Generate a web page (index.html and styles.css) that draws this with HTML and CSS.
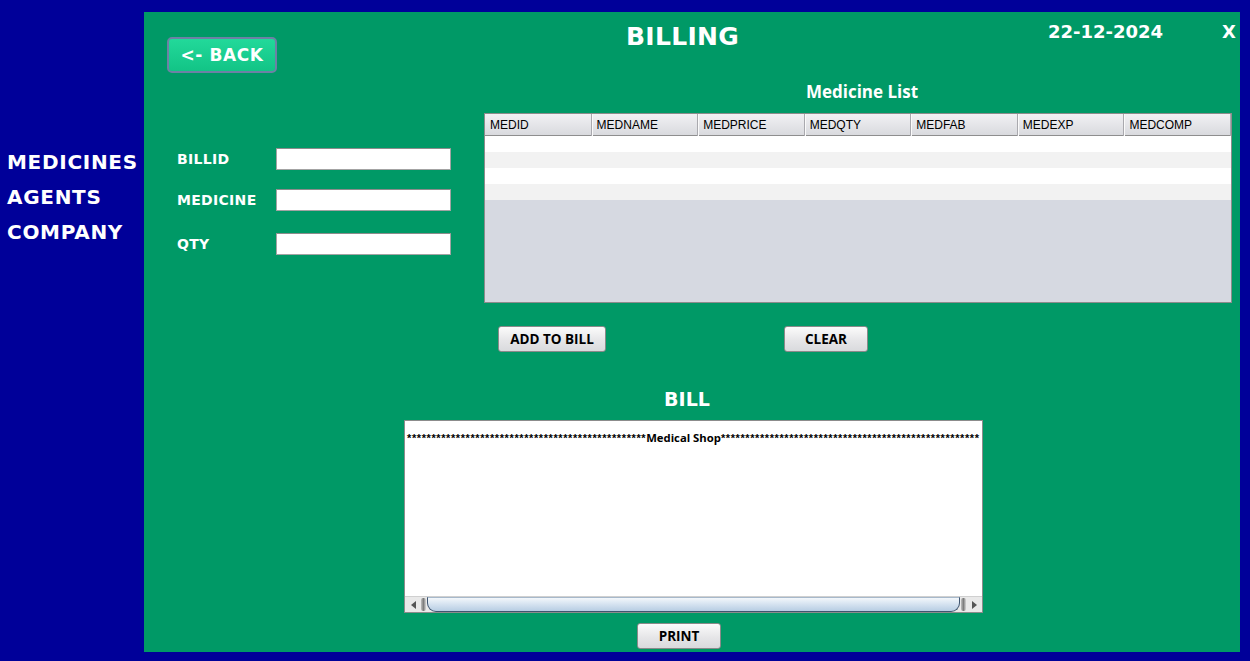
FILE: index.html
```html
<!DOCTYPE html>
<html>
<head>
<meta charset="utf-8">
<title>Billing</title>
<link rel="stylesheet" href="styles.css">
</head>
<body>
<div class="app">
  <aside class="side">
    <div class="side-item">MEDICINES</div>
    <div class="side-item">AGENTS</div>
    <div class="side-item">COMPANY</div>
  </aside>
  <main class="panel">
    <div class="top">
      <div class="left">
        <button class="back">&lt;- BACK</button>
        <div class="form">
          <div class="row"><span class="lbl">BILLID</span><div class="field"></div></div>
          <div class="row r2"><span class="lbl">MEDICINE</span><div class="field"></div></div>
          <div class="row r3"><span class="lbl">QTY</span><div class="field"></div></div>
        </div>
      </div>
      <div class="right">
        <div class="hdr">
          <div class="title">BILLING</div>
          <div class="date">22-12-2024</div>
          <div class="close">X</div>
        </div>
        <div class="list-title">Medicine List</div>
        <div class="table">
          <div class="thead">
            <div class="th">MEDID</div>
            <div class="th">MEDNAME</div>
            <div class="th">MEDPRICE</div>
            <div class="th">MEDQTY</div>
            <div class="th">MEDFAB</div>
            <div class="th">MEDEXP</div>
            <div class="th">MEDCOMP</div>
          </div>
          <div class="tr"></div>
          <div class="tr alt"></div>
          <div class="tr"></div>
          <div class="tr alt"></div>
        </div>
        <div class="actions">
          <button class="btn add">ADD TO BILL</button>
          <button class="btn clear">CLEAR</button>
        </div>
      </div>
    </div>
    <div class="bottom">
      <div class="bill-title">BILL</div>
      <div class="bill">
        <div class="bill-text"><span class="stars">*************************************************</span>Medical Shop<span class="stars">*****************************************************</span></div>
        <div class="hscroll">
          <div class="arrow"><span class="tri-l"></span></div>
          <div class="grip"></div>
          <div class="thumb"></div>
          <div class="grip"></div>
          <div class="arrow"><span class="tri-r"></span></div>
        </div>
      </div>
      <button class="btn print">PRINT</button>
    </div>
  </main>
</div>
</body>
</html>
```

FILE: styles.css
```css
* { box-sizing: border-box; }
html, body { margin: 0; padding: 0; }
body {
  width: 1250px;
  height: 661px;
  background: #000099;
  overflow: hidden;
  font-family: "DejaVu Sans", sans-serif;
}
.app { display: flex; height: 661px; }
.side {
  width: 144px;
  padding-top: 145px;
  padding-left: 7px;
}
.side-item {
  color: #fff;
  font-weight: bold;
  font-size: 20px;
  line-height: 35px;
  letter-spacing: 0.7px;
  white-space: nowrap;
}
.panel {
  margin-top: 12px;
  width: 1096px;
  height: 640px;
  background: #009966;
  display: flex;
  flex-direction: column;
}
.top { display: flex; height: 340px; }
.left { width: 340px; }
.back {
  display: block;
  margin: 25px 0 0 23px;
  width: 110px;
  height: 36px;
  border: 2px solid #6d81a5;
  border-radius: 5px;
  background: linear-gradient(#22d99a, #12c486);
  color: #fff;
  font-family: "DejaVu Sans", sans-serif;
  font-weight: bold;
  font-size: 17px;
  letter-spacing: 0.6px;
  padding: 0;
}
.form { margin-top: 75px; padding-left: 33px; }
.row { display: flex; align-items: center; height: 22px; }
.r2 { margin-top: 19px; }
.r3 { margin-top: 22px; }
.lbl {
  width: 99px;
  color: #fff;
  font-weight: bold;
  font-size: 14px;
  letter-spacing: 0.3px;
}
.field {
  width: 175px;
  height: 22px;
  background: #fff;
  border: 1px solid #a3a3a3;
  border-top-color: #8c8c8c;
}
.right { width: 756px; }
.hdr {
  display: flex;
  padding-top: 10px;
  padding-left: 142px;
  height: 40px;
  color: #fff;
  font-weight: bold;
}
.title { width: 422px; font-size: 25px; line-height: 30px; letter-spacing: 0.3px; }
.date { width: 174px; font-size: 18px; line-height: 22px; margin-top: -1px; }
.close { font-size: 18px; line-height: 22px; margin-top: -1px; }
.list-title {
  margin-top: 28px;
  height: 23px;
  text-align: center;
  color: #fff;
  font-family: "Open Sans", sans-serif;
  font-weight: bold;
  font-size: 17px;
  line-height: 23px;
}
.table {
  margin-top: 10px;
  width: 748px;
  height: 190px;
  border: 1px solid #8c8c8c;
  background: #d6d9e1;
}
.thead {
  display: grid;
  grid-template-columns: repeat(7, 1fr);
  height: 22px;
  border-bottom: 1px solid #8e8e8e;
  background: linear-gradient(#f1f1f4, #d9dade);
}
.th {
  font-family: "Liberation Sans", Arial, sans-serif;
  font-size: 12px;
  line-height: 22px;
  color: #000;
  padding-left: 5px;
  border-right: 1px solid #a9a9ae;
  box-shadow: inset 1px 0 0 #fafafa;
}
.th:first-child { box-shadow: none; }
.tr { height: 16px; background: #fff; }
.tr.alt { background: #f2f2f2; }
.actions { display: flex; margin-top: 23px; padding-left: 14px; }
.btn {
  height: 26px;
  border: 1px solid #8a8a8a;
  border-radius: 3px;
  background: linear-gradient(#fbfbfb, #e6e6e8 55%, #d9dadd);
  color: #000;
  font-family: "Open Sans", sans-serif;
  font-weight: bold;
  font-size: 13.5px;
  padding: 0;
}
.add { width: 108px; }
.clear { width: 84px; margin-left: 178px; }
.bottom {
  margin-top: 36px;
  padding-left: 260px;
  display: flex;
  flex-direction: column;
  width: 839px;
}
.bill-title {
  height: 22px;
  text-align: center;
  padding-right: 13px;
  color: #fff;
  font-weight: bold;
  font-size: 19px;
  line-height: 22px;
}
.bill {
  margin-top: 10px;
  width: 579px;
  height: 193px;
  background: #fff;
  border: 1px solid #8c8c8c;
  display: flex;
  flex-direction: column;
  justify-content: space-between;
}
.bill-text {
  padding: 9px 0 0 2px;
  white-space: nowrap;
  font-family: "Open Sans", sans-serif;
  font-weight: bold;
  font-size: 11.3px;
  line-height: 15px;
  color: #000;
}
.stars {
  font-family: "Liberation Sans", Arial, sans-serif;
  font-size: 11px;
  letter-spacing: 0.6px;
}
.hscroll {
  display: flex;
  height: 16px;
  background: #e9e9e9;
  border-top: 1px solid #d0d0d0;
}
.arrow {
  width: 16px;
  display: flex;
  align-items: center;
  justify-content: center;
}
.tri-l {
  width: 0; height: 0;
  border-top: 4px solid transparent;
  border-bottom: 4px solid transparent;
  border-right: 5px solid #555;
}
.tri-r {
  width: 0; height: 0;
  border-top: 4px solid transparent;
  border-bottom: 4px solid transparent;
  border-left: 5px solid #555;
}
.grip {
  width: 5px;
  background: linear-gradient(90deg, #bdbdbd, #7d7d7d, #d5d5d5);
  margin: 1px 0;
  border-radius: 2px;
}
.thumb {
  flex: 1;
  margin: 0 1px;
  border: 1px solid #3f5570;
  border-top-color: #a7b9cb;
  border-radius: 0 0 9px 9px;
  background: linear-gradient(#f3f7fb, #d7e4f1 45%, #b7cde3);
}
.print { width: 84px; margin-top: 10px; margin-left: 233px; }
```
